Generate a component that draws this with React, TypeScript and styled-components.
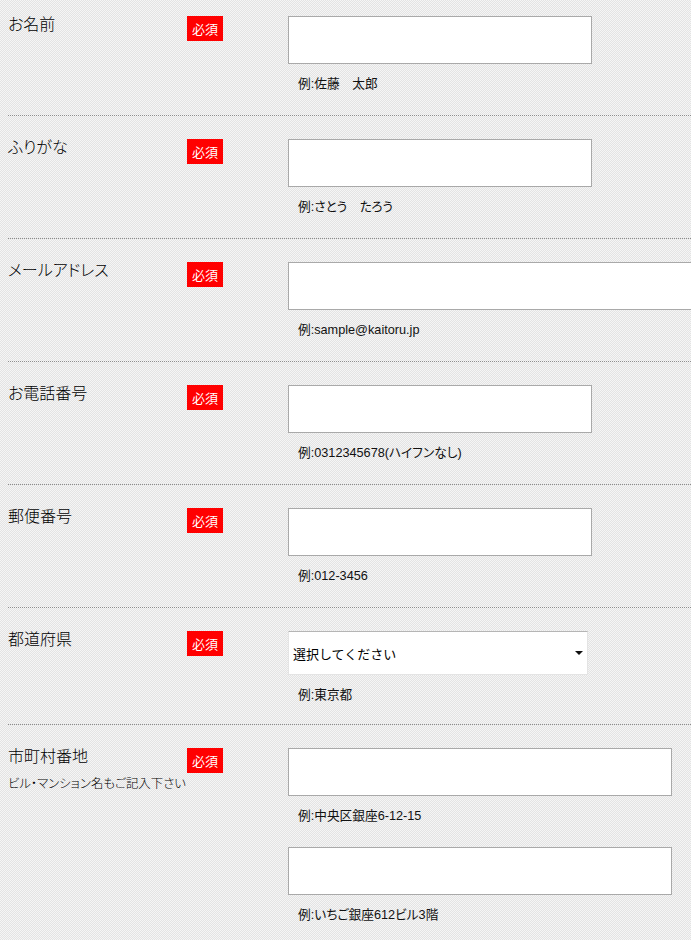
import styled, { createGlobalStyle } from "styled-components";

const GlobalStyle = createGlobalStyle`
  html, body {
    margin: 0;
    padding: 0;
  }
  body {
    font-family: "Liberation Sans", "Noto Sans CJK JP", sans-serif;
    color: #111;
    background: repeating-conic-gradient(#e3e3e3 0 25%, #f5f5f5 0 50%) 0 0 / 2px 2px;
    overflow-x: hidden;
  }
`

type Field = {
    label: string;
    sub?: string;
    inputs: { hint: string; width: number }[];
    select?: boolean;
};

const fields: Field[] = [
    { label: "お名前", inputs: [{ hint: "例:佐藤　太郎", width: 304 }] },
    { label: "ふりがな", inputs: [{ hint: "例:さとう　たろう", width: 304 }] },
    { label: "メールアドレス", inputs: [{ hint: "例:sample@kaitoru.jp", width: 440 }] },
    { label: "お電話番号", inputs: [{ hint: "例:0312345678(ハイフンなし)", width: 304 }] },
    { label: "郵便番号", inputs: [{ hint: "例:012-3456", width: 304 }] },
    { label: "都道府県", select: true, inputs: [{ hint: "例:東京都", width: 300 }] },
    {
        label: "市町村番地",
        sub: "ビル・マンション名もご記入下さい",
        inputs: [
            { hint: "例:中央区銀座6-12-15", width: 384 },
            { hint: "例:いちご銀座612ビル3階", width: 384 },
        ],
    },
];

export default function App() {
    return (
        <>
            <GlobalStyle />
            <Form>
                {fields.map((f, i) => (
                    <Row key={f.label} $last={i === fields.length - 1} $select={f.select}>
                        <LabelCell>
                            <Label>{f.label}</Label>
                            {f.sub && <SubLabel>{f.sub}</SubLabel>}
                        </LabelCell>
                        <BadgeCell>
                            <Badge>必須</Badge>
                        </BadgeCell>
                        <InputCell>
                            {f.inputs.map((inp) => (
                                <InputGroup key={inp.hint}>
                                    {f.select ? (
                                        <SelectWrap $width={inp.width}>
                                            <Select defaultValue="">
                                                <option value="">選択してください</option>
                                                <option value="tokyo">東京都</option>
                                            </Select>
                                        </SelectWrap>
                                    ) : (
                                        <TextInput type="text" $width={inp.width} />
                                    )}
                                    <Hint>{inp.hint}</Hint>
                                </InputGroup>
                            ))}
                        </InputCell>
                    </Row>
                ))}
            </Form>
        </>
    )
};

const Form = styled.div`
  padding-left: 8px;
  font-feature-settings: "palt";
`

const Row = styled.div<{ $last?: boolean; $select?: boolean }>`
  display: grid;
  grid-template-columns: 179px 101px 1fr;
  padding: 23px 0 ${(p) => (p.$select ? 19 : 21)}px 0;
  border-bottom: ${(p) => (p.$last ? "none" : "1px dotted #8c8c8c")};

  &:first-child {
    padding-top: 16px;
  }
`

const LabelCell = styled.div`
  display: flex;
  flex-direction: column;
  white-space: nowrap;
`

const Label = styled.div`
  font-family: "Noto Sans CJK JP", sans-serif;
  font-size: 16px;
  font-weight: 300;
  line-height: 16px;
  margin-top: -1px;
  color: #000;
`

const SubLabel = styled.div`
  font-family: "Noto Sans CJK JP", sans-serif;
  font-size: 12.4px;
  font-weight: 300;
  line-height: 16px;
  margin-top: 12px;
  color: #000;
`

const BadgeCell = styled.div`
  display: flex;
  align-items: flex-start;
`

const Badge = styled.span`
  display: flex;
  align-items: center;
  justify-content: center;
  width: 36px;
  height: 25px;
  background: #ff0000;
  color: #fff;
  font-family: "Noto Sans CJK JP", sans-serif;
  font-size: 13px;
`

const InputCell = styled.div`
  display: flex;
  flex-direction: column;
  gap: 21px;
`

const InputGroup = styled.div`
  display: flex;
  flex-direction: column;
`

const TextInput = styled.input<{ $width: number }>`
  box-sizing: border-box;
  width: ${(p) => p.$width}px;
  height: 48px;
  margin: 0;
  background: #fff;
  border: 1px solid #a9a9a9;
  padding: 0 6px;
  font-size: 14px;
`

const SelectWrap = styled.div<{ $width: number }>`
  position: relative;
  width: ${(p) => p.$width}px;

  &::after {
    content: "";
    position: absolute;
    right: 5px;
    top: 20px;
    border-left: 4px solid transparent;
    border-right: 4px solid transparent;
    border-top: 4px solid #111;
    pointer-events: none;
  }
`

const Select = styled.select`
  appearance: none;
  box-sizing: border-box;
  width: 100%;
  height: 44px;
  margin: 0;
  padding: 0 4px;
  background: #fff;
  border: 1px solid #e4e4e4;
  border-top-color: #b5b5b5;
  border-radius: 0;
  font-family: "Noto Sans CJK JP", sans-serif;
  font-size: 13px;
  color: #000;
`

const Hint = styled.div`
  margin-top: 10px;
  padding-left: 10px;
  font-family: "Liberation Sans", "Noto Sans CJK JP", sans-serif;
  font-size: 12.7px;
  line-height: 20px;
  white-space: nowrap;
`
